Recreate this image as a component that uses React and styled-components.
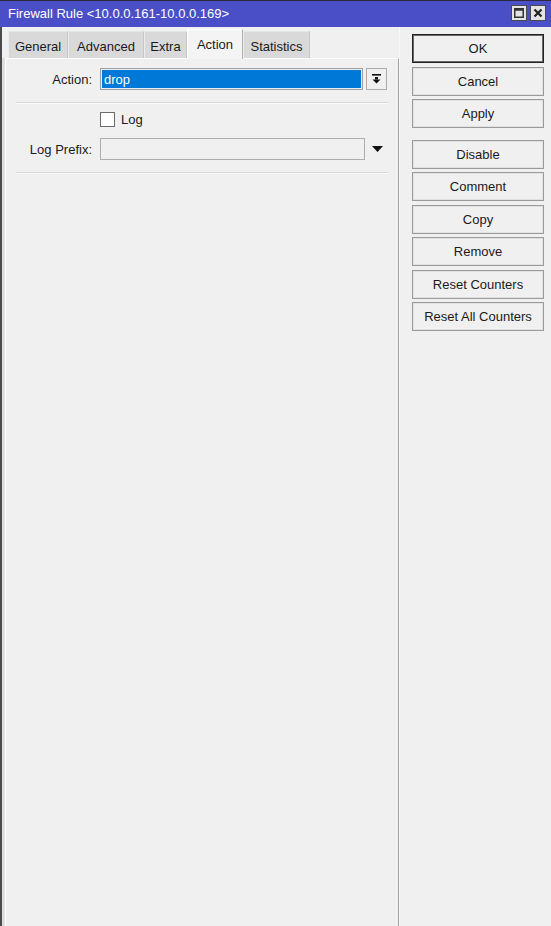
import * as React from "react"
import styled, { createGlobalStyle } from "styled-components"

const GlobalStyle = createGlobalStyle`
  html, body {
    margin: 0;
    padding: 0;
    background: #f0f0f0;
  }
  body {
    font-family: "Liberation Sans", Arial, sans-serif;
    font-size: 13px;
    color: #111;
  }
`

// tab widths taken from the dialog as drawn by winbox
const tabs = [
  { label: "General", width: 60 },
  { label: "Advanced", width: 76 },
  { label: "Extra", width: 43 },
  { label: "Action", width: 56, active: true },
  { label: "Statistics", width: 67 },
]

const buttons = [
  { label: "OK", primary: true },
  { label: "Cancel" },
  { label: "Apply" },
  { label: "Disable", spaced: true },
  { label: "Comment" },
  { label: "Copy" },
  { label: "Remove" },
  { label: "Reset Counters" },
  { label: "Reset All Counters" },
]

const MaximizeIcon = () => (
  <svg width="10" height="10" viewBox="0 0 10 10">
    <rect x="0.75" y="0.75" width="8.5" height="8.5" fill="none" stroke="#333" strokeWidth="1.5" />
    <rect x="0.75" y="0.75" width="8.5" height="2" fill="#333" />
  </svg>
)

const CloseIcon = () => (
  <svg width="10" height="10" viewBox="0 0 10 10">
    <path d="M1.5 1.5 L8.5 8.5 M8.5 1.5 L1.5 8.5" stroke="#222" strokeWidth="2.2" />
  </svg>
)

const DropIcon = () => (
  <svg width="11" height="10" viewBox="0 0 11 10">
    <rect x="1" y="0" width="9" height="1.6" fill="#111" />
    <rect x="4" y="3" width="3" height="2.5" fill="#111" />
    <polygon points="1.5,5.5 9.5,5.5 5.5,9.5" fill="#111" />
  </svg>
)

const ArrowDown = () => (
  <svg width="11" height="6" viewBox="0 0 11 6">
    <polygon points="0,0 11,0 5.5,6" fill="#111" />
  </svg>
)

const App = () => {
  return (
    <>
      <GlobalStyle />
      <Window>
        <TitleBar>
          <Title>Firewall Rule &lt;10.0.0.161-10.0.0.169&gt;</Title>
          <Controls>
            <ControlBox>
              <MaximizeIcon />
            </ControlBox>
            <ControlBox>
              <CloseIcon />
            </ControlBox>
          </Controls>
        </TitleBar>
        <Body>
          <Main>
            <TabStrip>
              {tabs.map((t) => (
                <Tab key={t.label} $active={t.active} $width={t.width}>
                  {t.label}
                </Tab>
              ))}
            </TabStrip>
            <Panel>
              <FieldRow>
                <Label>Action:</Label>
                <SelectBox>drop</SelectBox>
                <SelectButton>
                  <DropIcon />
                </SelectButton>
              </FieldRow>
              <Separator />
              <CheckRow>
                <Checkbox />
                <span>Log</span>
              </CheckRow>
              <FieldRow $top={11}>
                <Label>Log Prefix:</Label>
                <TextInput />
                <ArrowSlot>
                  <ArrowDown />
                </ArrowSlot>
              </FieldRow>
              <Separator />
            </Panel>
          </Main>
          <Side>
            {buttons.map((b) => (
              <Button key={b.label} $primary={b.primary} $spaced={b.spaced}>
                {b.label}
              </Button>
            ))}
          </Side>
        </Body>
      </Window>
    </>
  )
}

export default App

const Window = styled.div`
  width: 551px;
  height: 926px;
  display: flex;
  flex-direction: column;
  overflow: hidden;
  background: #f0f0f0;
`

const TitleBar = styled.div`
  height: 26px;
  flex-shrink: 0;
  display: flex;
  align-items: center;
  justify-content: space-between;
  background: #4a4fc8;
  border-top: 1px solid #2a2a3a;
  padding: 0 5px 0 8px;
`

const Title = styled.div`
  color: #fff;
  font-size: 13px;
  padding-bottom: 2px;
`

const Controls = styled.div`
  display: flex;
  gap: 3px;
  padding-bottom: 2px;
`

const ControlBox = styled.div`
  width: 14px;
  height: 14px;
  border: 1px solid #4a4a4a;
  background: #e4e4e4;
  display: flex;
  align-items: center;
  justify-content: center;
`

const Body = styled.div`
  flex: 1;
  display: flex;
  border-left: 2px solid #4a4a4a;
`

const Main = styled.div`
  width: 397px;
  display: flex;
  flex-direction: column;
`

const TabStrip = styled.div`
  height: 31px;
  display: flex;
  align-items: flex-end;
  padding-left: 6px;
  flex-shrink: 0;
`

const Tab = styled.div`
  width: ${(p) => p.$width}px;
  height: ${(p) => (p.$active ? "30px" : "27px")};
  box-sizing: border-box;
  display: flex;
  align-items: center;
  justify-content: center;
  background: ${(p) => (p.$active ? "#f4f4f4" : "#d9d9d9")};
  border-top: 1px solid ${(p) => (p.$active ? "#ffffff" : "#e6e6e6")};
  border-left: 1px solid ${(p) => (p.$active ? "#ffffff" : "#ececec")};
  border-right: 1px solid ${(p) => (p.$active ? "#b0b0b0" : "#c6c6c6")};
  margin-bottom: ${(p) => (p.$active ? "-1px" : "0")};
  padding-top: ${(p) => (p.$active ? "0" : "2px")};
  position: relative;
  z-index: ${(p) => (p.$active ? 1 : 0)};
  color: #1a1a1a;
  font-size: 13px;
  white-space: nowrap;
`

const Panel = styled.div`
  flex: 1;
  margin-left: 3px;
  border-left: 1px solid #ffffff;
  border-top: 1px solid #ffffff;
  border-right: 1px solid #a3a3a3;
  box-shadow: -3px 0 0 #dddddd;
  padding-top: 9px;
`

const FieldRow = styled.div`
  display: flex;
  align-items: center;
  height: 22px;
  margin-top: ${(p) => (p.$top ? `${p.$top}px` : "0")};
`

const Label = styled.div`
  width: 86px;
  text-align: right;
  margin-right: 8px;
  color: #1a1a1a;
`

const SelectBox = styled.div`
  width: 263px;
  height: 22px;
  box-sizing: border-box;
  border: 1px solid #a0a0a0;
  box-shadow: inset 0 0 0 1px #e6eef8;
  background: #0078d7;
  color: #fff;
  display: flex;
  align-items: center;
  padding-left: 3px;
`

const SelectButton = styled.div`
  width: 21px;
  height: 22px;
  box-sizing: border-box;
  margin-left: 3px;
  border: 1px solid #adadad;
  background: #f0f0f0;
  display: flex;
  align-items: center;
  justify-content: center;
`

const TextInput = styled.div`
  width: 265px;
  height: 22px;
  box-sizing: border-box;
  border: 1px solid #adadad;
  background: #f0f0f0;
`

const ArrowSlot = styled.div`
  margin-left: 7px;
  display: flex;
  align-items: center;
  padding-bottom: 1px;
`

const Separator = styled.div`
  margin: 12px 10px 0 10px;
  border-top: 1px solid #d7d7d7;
  border-bottom: 1px solid #fafafa;
`

const CheckRow = styled.div`
  display: flex;
  align-items: center;
  margin-top: 8px;
  padding-left: 94px;
  height: 15px;
  gap: 6px;
  color: #1a1a1a;
`

const Checkbox = styled.div`
  width: 15px;
  height: 15px;
  box-sizing: border-box;
  border: 1px solid #6a6a6a;
  background: #fff;
`

const Side = styled.div`
  flex: 1;
  display: flex;
  flex-direction: column;
  padding: 7px 0 0 12px;
  border-left: 1px solid #f8f8f8;
`

const Button = styled.div`
  width: 132px;
  height: 29px;
  box-sizing: border-box;
  margin-top: ${(p) => (p.$spaced ? "8px" : "0")};
  margin-bottom: 3.5px;
  display: flex;
  align-items: center;
  justify-content: center;
  background: #f0f0f0;
  border: 1px solid ${(p) => (p.$primary ? "#222" : "#9a9a9a")};
  box-shadow: inset 0 0 0 1px ${(p) => (p.$primary ? "#6a6a6a" : "#e2e2e2")};
  color: #1a1a1a;
  font-size: 13px;
`
